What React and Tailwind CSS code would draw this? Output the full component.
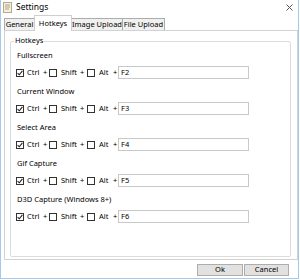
import React from 'react';

const hotkeys = [
  { label: 'Fullscreen', key: 'F2' },
  { label: 'Current Window', key: 'F3' },
  { label: 'Select Area', key: 'F4' },
  { label: 'Gif Capture', key: 'F5' },
  { label: 'D3D Capture (Windows 8+)', key: 'F6' },
];

const tabs = [
  { name: 'General', w: 'w-[31px]' },
  { name: 'Hotkeys', w: 'w-[38px]', active: true },
  { name: 'Image Upload', w: 'w-[52px]' },
  { name: 'File Upload', w: 'w-[43px]' },
];

const Box = ({ checked }) => (
  <span className="w-[8px] h-[8px] shrink-0 border border-[#333] bg-white flex items-center justify-center">
    {checked && (
      <svg width="6" height="6" viewBox="0 0 6 6">
        <path d="M0.6 3.1 L2.3 4.8 L5.4 0.9" fill="none" stroke="#222" strokeWidth="1.1" />
      </svg>
    )}
  </span>
);

const Row = ({ k }) => (
  <div className="flex items-center h-[13px] pl-[5px]">
    <Box checked />
    <span className="w-[16px] ml-[3px]">Ctrl</span>
    <span className="w-[6px]">+</span>
    <Box />
    <span className="w-[19px] ml-[4px]">Shift</span>
    <span className="w-[7px]">+</span>
    <Box />
    <span className="w-[14px] ml-[4px]">Alt</span>
    <span className="w-[5px]">+</span>
    <div className="w-[131px] h-[13px] border border-[#c9c9c9] bg-white pl-[2px] flex items-center">{k}</div>
  </div>
);

export default function App() {
  return (
    <div className="w-[300px] h-[280px] bg-white overflow-hidden">
      <div className="w-[299px] h-[279px] border-l border-r border-b border-[#a5c8ec] bg-white flex flex-col text-[7.5px] leading-none text-black font-['Noto_Sans',sans-serif]">
        {/* title */}
        <div className="h-[15px] shrink-0 flex items-center pl-[2px] pr-[5px]">
          <svg width="9" height="11" viewBox="0 0 9 11" className="shrink-0">
            <rect x="0.5" y="0.5" width="8" height="10" fill="#f6efe0" stroke="#b9a98a" />
            <path d="M2 3h5M2 5h5M2 7h4" stroke="#9c8d70" strokeWidth="0.8" />
          </svg>
          <span className="ml-[4px] text-[8.5px]">Settings</span>
          <svg width="7" height="7" viewBox="0 0 7 7" className="ml-auto">
            <path d="M0.5 0.5 L6.5 6.5 M6.5 0.5 L0.5 6.5" stroke="#555" strokeWidth="1" />
          </svg>
        </div>
        {/* tabs */}
        <div className="h-[15px] shrink-0 flex items-end pl-[3px]">
          {tabs.map((t, i) => (
            <div
              key={t.name}
              className={`${t.w} ${i > 0 ? '-ml-px' : ''} ${t.active ? 'h-[16px] -mb-px bg-white border-[#cfcfcf] relative z-10' : 'h-[12px] bg-[#f0f0f0] border-[#acacac]'} border border-b-0 flex items-center justify-center`}
            >
              {t.name}
            </div>
          ))}
        </div>
        {/* panel */}
        <div className="ml-[3px] w-[294px] h-[230px] shrink-0 border border-[#d2d2d2] bg-white">
          <div className="ml-[5px] mt-[10px] w-[281px] h-[216px] border border-[#dcdcdc] rounded-[2px] relative pt-[9px]">
            <span className="absolute -top-[5px] left-[3px] bg-white px-[1px]">Hotkeys</span>
            {hotkeys.map((h) => (
              <div key={h.label} className="h-[36px]">
                <div className="h-[10px] flex items-center pl-[6px]">{h.label}</div>
                <div className="mt-[5px]">
                  <Row k={h.key} />
                </div>
              </div>
            ))}
          </div>
        </div>
        {/* buttons */}
        <div className="flex justify-end gap-[1px] pr-[9px] mt-[4px]">
          <button className="w-[46px] h-[12px] border border-[#adadad] bg-[#e1e1e1] flex items-center justify-center">Ok</button>
          <button className="w-[45px] h-[12px] border border-[#adadad] bg-[#e1e1e1] flex items-center justify-center">Cancel</button>
        </div>
      </div>
    </div>
  );
}
